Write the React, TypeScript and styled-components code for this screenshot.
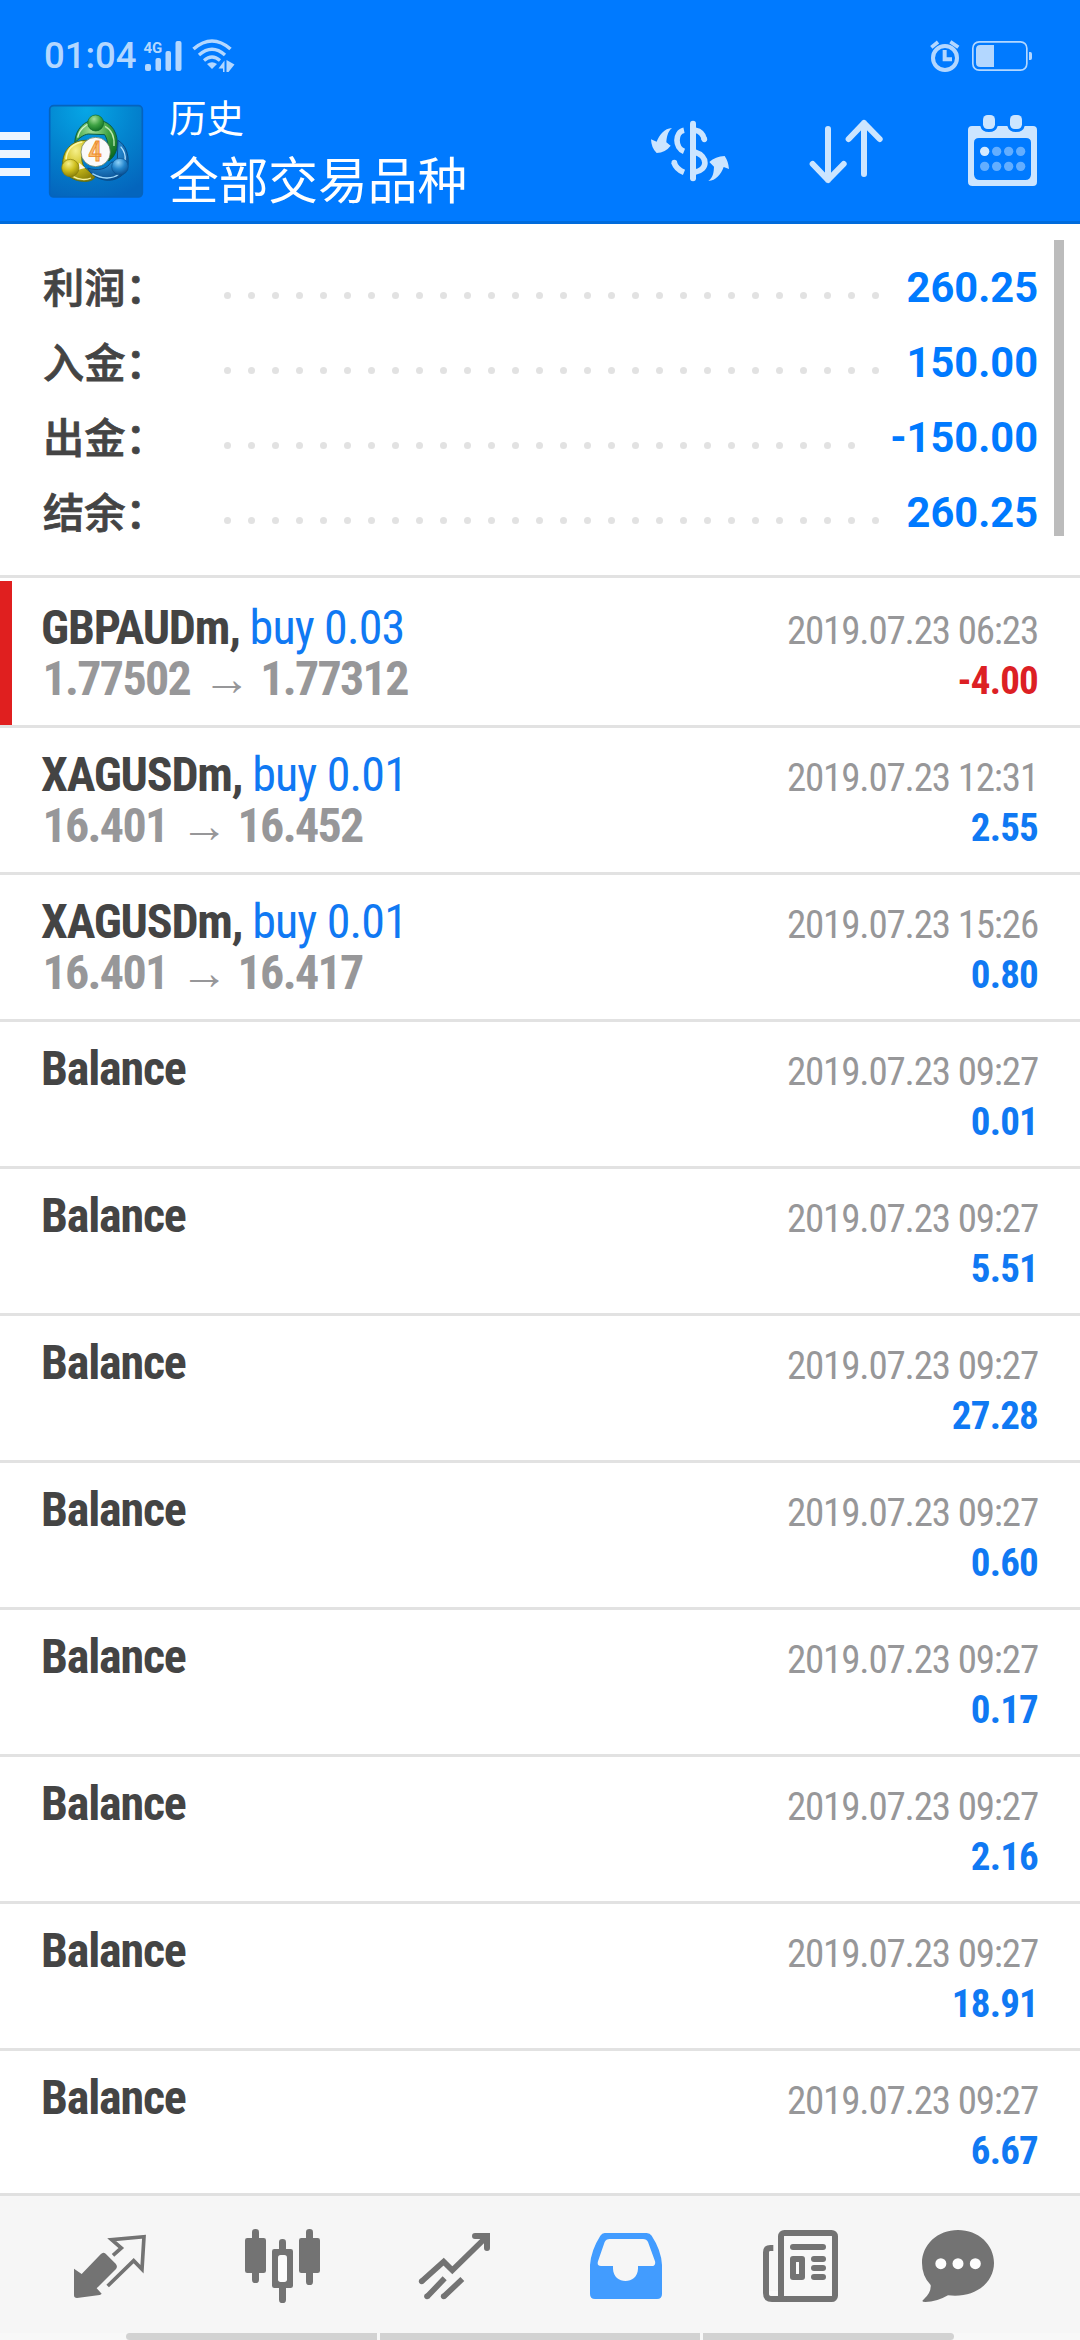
import React from 'react';
import styled, { createGlobalStyle } from 'styled-components';

const blue = '#007aff';
const ink = '#444444';
const muted = '#979799';
const pale = '#cce5ff';
const dim = '#b3d7ff';
const line = '#e2e2e2';
const tabGray = '#737373';

const GlobalStyle = createGlobalStyle`
  *, *::before, *::after { box-sizing: border-box; }
  body {
    margin: 0;
    background: #fff;
    font-family: Roboto, "Noto Sans CJK SC", sans-serif;
  }
`;

const Screen = styled.div`
  display: flex;
  flex-direction: column;
  width: 1080px;
  height: 2340px;
  overflow: hidden;
  background: #fff;
`;

const Header = styled.header`
  flex: none;
  height: 224px;
  background: ${blue};
  border-bottom: 3px solid #006bdc;
`;

const StatusBar = styled.div`
  display: flex;
  align-items: center;
  height: 84px;
  padding: 28px 47px 0 44px;
  color: ${dim};
`;

const Clock = styled.span`
  width: 99px;
  font-size: 36.5px;
  font-weight: 500;
  line-height: 54px;
`;

const StatusIcons = styled.div`
  display: flex;
  align-items: center;
  gap: 9px;
`;

const StatusRight = styled(StatusIcons)`
  margin-left: auto;
  gap: 11px;
`;

const Toolbar = styled.div`
  display: flex;
  align-items: center;
  height: 137px;
  padding: 0 42px 4px 0;
`;

const MenuButton = styled.button`
  display: flex;
  flex-direction: column;
  gap: 10px;
  width: 30px;
  margin: 6px 18px 0 0;
  padding: 0;
  border: 0;
  background: none;
`;

const MenuBar = styled.span`
  height: 8px;
  background: #ecf5ff;
`;

const Titles = styled.div`
  display: flex;
  flex-direction: column;
  margin: 0 0 3px 25px;
  color: #fff;
  font-family: "Noto Sans CJK SC", sans-serif;
`;

const Title = styled.span`
  font-size: 37.5px;
  line-height: 56px;
`;

const Subtitle = styled.span`
  font-size: 49.7px;
  line-height: 66px;
`;

const Actions = styled.div`
  display: flex;
  align-items: center;
  gap: 78px;
  margin-left: auto;

  > :last-child { margin-left: 5px; }
`;

const Summary = styled.section`
  position: relative;
  flex: none;
  height: 354px;
  padding: 26px 42px 0 43px;
  border-bottom: 3px solid ${line};
`;

const SummaryRow = styled.div`
  display: flex;
  align-items: center;
  height: 75px;
`;

const SummaryLabel = styled.span`
  width: 181px;
  padding-bottom: 5px;
  color: ${ink};
  font-family: "Noto Sans CJK SC", sans-serif;
  font-size: 41.2px;
  font-weight: 500;
  -webkit-text-stroke: 0.8px ${ink};
`;

const Leader = styled.div`
  display: flex;
  flex: 1;
  flex-wrap: wrap;
  gap: 17px;
  height: 7px;
  margin: 16px 20px 0 0;
  overflow: hidden;
`;

const Dot = styled.i`
  width: 7px;
  height: 7px;
  border-radius: 50%;
  background: ${line};
`;

const SummaryValue = styled.span`
  color: ${blue};
  font-size: 41.6px;
  font-weight: 700;
`;

const Scrollbar = styled.div`
  position: absolute;
  top: 16px;
  right: 16px;
  width: 10px;
  height: 296px;
  background: #bcbcbc;
`;

const History = styled.main`
  flex: 1;
  min-height: 0;
  padding-top: 3px;
  overflow: hidden;
`;

const Deal = styled.article<{ $loss?: boolean }>`
  display: flex;
  justify-content: space-between;
  height: 147px;
  padding: 21px 42px 0 41px;
  border-bottom: 3px solid ${line};
  background: linear-gradient(${(p) => (p.$loss ? '#e01f1f, #e01f1f' : '#fff, #fff')}) 0 0 / 12px 100% no-repeat;
  font-family: "Roboto Condensed", Roboto, sans-serif;
`;

const DealSide = styled.div<{ $end?: boolean }>`
  display: flex;
  flex-direction: column;
  align-items: ${(p) => (p.$end ? 'flex-end' : 'flex-start')};
  line-height: 51px;
  white-space: pre;
`;

const Instrument = styled.span`
  color: ${ink};
  font-size: 48px;
  font-weight: 700;
  letter-spacing: -1.2px;
`;

const Volume = styled.span`
  color: #1079f3;
  font-weight: 400;
  letter-spacing: -0.85px;
`;

const Prices = styled.span`
  padding-left: 1.5px;
  color: ${muted};
  font-size: 48px;
  font-weight: 700;
  letter-spacing: -1.7px;
`;

const Arrow = styled.span`
  margin-left: 3.3px;
  letter-spacing: 0;
`;

const Time = styled.time`
  margin-top: 5px;
  color: ${muted};
  font-size: 39px;
  letter-spacing: -1.16px;
  line-height: 48px;
`;

const Amount = styled.span<{ $loss?: boolean }>`
  padding-top: 1px;
  color: ${(p) => (p.$loss ? '#dc2024' : '#1079f3')};
  font-size: 39px;
  font-weight: 700;
  letter-spacing: -0.8px;
`;

const TabBar = styled.nav`
  display: grid;
  flex: none;
  grid-template-columns: repeat(4, 172px) 176px 140px;
  height: 140px;
  padding-left: 24px;
  border-top: 3px solid #e0e0e0;
  background: #f6f6f6;
`;

const Tab = styled.button<{ $active?: boolean }>`
  display: flex;
  align-items: center;
  justify-content: center;
  padding: 2px 0 0;
  border: 0;
  background: none;
  color: ${(p) => (p.$active ? '#429cff' : tabGray)};
`;

const GestureBar = styled.div`
  display: grid;
  flex: none;
  grid-template-columns: 251px 320px 251px;
  gap: 3px;
  height: 7px;
  padding-left: 126px;
  background: #f8f8f8;
`;

const Handle = styled.span<{ $radius?: string }>`
  border-radius: ${(p) => p.$radius ?? '0'};
  background: #d2d2d2;
`;

const Signal = () => (
  <svg width="40" height="32" viewBox="0 0 40 32" fill={dim}>
    <text x="0.500" y="12.500" fontFamily="Roboto" fontSize="15" fontWeight="700">4G</text>
    <rect x="2" y="24" width="6" height="7" rx="2" />
    <rect x="12.5" y="18" width="5.5" height="13" rx="2" />
    <rect x="22.5" y="11" width="5.5" height="20" rx="2" />
    <rect x="32.5" y="1" width="6" height="30" rx="2" />
  </svg>
);

const Wifi = () => (
  <svg width="43" height="34" viewBox="0 0 43 34" fill="none" stroke={dim}>
    <path d="M1.5 10Q20 -6 38.5 10" strokeWidth="3.6" />
    <path d="M7 16Q20 4.500 33 16" strokeWidth="3.4" />
    <path d="M12 21.500Q20 14.500 28 21.500" strokeWidth="3.2" />
    <path d="M15 25Q20 21.500 25 25L20 30Z" fill={dim} stroke="none" />
    <path d="M26.500 29.500L32.500 21.500V33H31V29.500ZM34.500 21L42.500 25.500L36.500 33H34.500Z" fill={dim} stroke="none" />
  </svg>
);

const Alarm = () => (
  <svg width="30" height="34" viewBox="870 24 90 102" fill="none" stroke={dim}>
    <circle cx="915" cy="81" r="36" strokeWidth="12" />
    <path d="M914 57V85H936" strokeWidth="12" />
    <path d="M874 49L894 33M931 32L955 49" strokeWidth="11" />
  </svg>
);

const Battery = () => (
  <svg width="62" height="32" viewBox="993 27 186 96">
    <rect x="998.5" y="32.500" width="162" height="85" rx="19" fill="none" stroke={dim} strokeWidth="5" />
    <path d="M1062 42H1021Q1008 42 1008 55V95Q1008 108 1021 108H1062Z" fill={dim} />
    <path d="M1167 63H1171Q1176 63 1176 69V81Q1176 87 1171 87H1167Z" fill={dim} />
  </svg>
);

const Logo = () => (
  <svg width="96" height="94" viewBox="24 30 288 282">
    <defs>
      <radialGradient id="tile" cx="0.4" cy="0.05" r="1">
        <stop offset="0" stopColor="#06a6e6" />
        <stop offset="0.5" stopColor="#0384cf" />
        <stop offset="1" stopColor="#0465bd" />
      </radialGradient>
      <radialGradient id="green" cx="0.4" cy="0.25" r="0.8">
        <stop offset="0" stopColor="#a5e09a" />
        <stop offset="0.5" stopColor="#3fa344" />
        <stop offset="1" stopColor="#0c6a21" />
      </radialGradient>
      <radialGradient id="yellow" cx="0.4" cy="0.25" r="0.8">
        <stop offset="0" stopColor="#f6f08a" />
        <stop offset="0.5" stopColor="#cfbf1d" />
        <stop offset="1" stopColor="#857c08" />
      </radialGradient>
      <radialGradient id="azure" cx="0.4" cy="0.25" r="0.8">
        <stop offset="0" stopColor="#8ed2fa" />
        <stop offset="0.5" stopColor="#2385cc" />
        <stop offset="1" stopColor="#07498c" />
      </radialGradient>
    </defs>
    <rect x="29" y="35" width="278" height="274" rx="12" fill="url(#tile)" stroke="#0563bd" strokeWidth="5" />
    <path d="M104 148C106 102 136 78 167 78C204 78 231 104 232 146C232 172 222 190 206 201C208 168 204 138 194 122L145 120C130 122 114 134 104 148Z" fill="url(#green)" stroke="#0b5c43" strokeWidth="3" />
    <path d="M113 131C117 107 137 91 151 89" fill="none" stroke="#d4f3cb" strokeWidth="4" />
    <path d="M195 97C216 108 224 128 222 156" fill="none" stroke="#b9e8b1" strokeWidth="4" />
    <path d="M144 139C101 137 71 162 68 205C68 242 100 265 142 262C156 260 164 254 166 247L133 220C126 208 124 196 126 184Z" fill="url(#yellow)" stroke="#5d7018" strokeWidth="3" />
    <path d="M127 144C96 149 80 170 78 196" fill="none" stroke="#fbf8a8" strokeWidth="5" />
    <path d="M100 248C116 258 139 259 153 252" fill="none" stroke="#f5f09a" strokeWidth="4" />
    <path d="M118 206L136 222L112 228Z" fill="#fdf7e0" />
    <path d="M234 139C257 153 267 181 264 210C261 244 224 264 194 258C168 253 150 239 143 222C173 232 201 226 213 205L232 203Z" fill="url(#azure)" stroke="#0a4c86" strokeWidth="3" />
    <path d="M242 158C253 171 257 188 255 200" fill="none" stroke="#b6e3ff" strokeWidth="4" />
    <path d="M157 239C184 255 216 257 236 241" fill="none" stroke="#9ed8fb" strokeWidth="4" />
    <circle cx="167" cy="87" r="24" fill="url(#green)" stroke="#0e6a2a" strokeWidth="2" />
    <circle cx="91" cy="222" r="26" fill="url(#yellow)" stroke="#857b0d" strokeWidth="2" />
    <circle cx="240" cy="218" r="25" fill="url(#azure)" stroke="#07508f" strokeWidth="2" />
    <circle cx="167" cy="174" r="44" fill="#fafafa" stroke="#5d7350" strokeWidth="2" />
    <text x="165" y="202" textAnchor="middle" fontFamily="Roboto Condensed" fontSize="82" fontWeight="500" fill="#f9bd70" stroke="#ee8a2e" strokeWidth="2.500">4</text>
  </svg>
);

const CurrencyIcon = () => (
  <svg width="80" height="64" viewBox="30 264 240 192" fill="none" stroke={pale}>
    <path d="M159 278V442" strokeWidth="18" strokeLinecap="round" />
    <path d="M132 298C104 304 104 350 132 361" strokeWidth="17" />
    <path d="M102 394C107 410 117 418 132 424" strokeWidth="17" strokeLinecap="butt" />
    <circle cx="103" cy="395" r="8.500" fill={pale} stroke="none" />
    <path d="M166 298C182 301 190 311 193 325" strokeWidth="17" />
    <circle cx="193" cy="325" r="8.500" fill={pale} stroke="none" />
    <path d="M164 363C206 376 204 417 164 424" strokeWidth="17" />
    <path d="M96 291C82 303 80 320 79 334L92 344Q76 365 50 366Q34 352 33 325L50 332C58 312 73 292 96 291Z" fill={pale} stroke="none" />
    <path d="M205 450C221 438 221 421 222 407L208 393Q226 376 254 375Q265 391 267 414L251 408C243 430 228 449 205 450Z" fill={pale} stroke="none" />
  </svg>
);

const SortIcon = () => (
  <svg width="76" height="66" viewBox="504 264 228 198" fill="none" stroke={pale} strokeWidth="18" strokeLinecap="round" strokeLinejoin="round">
    <path d="M564 297V450M518 402L564 450L611 402" />
    <path d="M672 432V279M626 327L672 279L719 327" />
  </svg>
);

const CalendarIcon = () => (
  <svg width="71" height="73" viewBox="981 252 213 219">
    <path
      fill={pale}
      fillRule="evenodd"
      d="M996 288H1021Q1025 306 1047 306Q1068 306 1073 288H1102Q1107 306 1128 306Q1150 306 1154 288H1179Q1191 288 1191 300V455Q1191 468 1179 468H998Q984 468 984 455V300Q984 288 996 288ZM1017 324Q1002 324 1002 338V434Q1004 450 1020 450H1156Q1171 450 1173 434V338Q1173 324 1158 324Z"
    />
    <rect x="1029" y="255" width="36" height="42" rx="14" fill={pale} />
    <rect x="1110" y="255" width="36" height="42" rx="14" fill={pale} />
    {[364, 409].map((y) =>
      [1034, 1070, 1106, 1142].map((x) => (
        <circle key={`${x}-${y}`} cx={x} cy={y} r="14" fill={x === 1034 && y === 364 ? '#d5eaff' : '#63aeff'} />
      )),
    )}
  </svg>
);

const QuotesIcon = () => (
  <svg width="76" height="66" viewBox="36 129 228 198">
    <path d="M42 236L65 252L122 193Q129 185 137 191L167 221Q174 229 168 237L110 295L125 311Q123 314 119 315L51 324Q42 324 42 316Z" fill="currentColor" />
    <path d="M159 196L184 174L155 149L252 140L246 238L221 212L143 288" fill="none" stroke="currentColor" strokeWidth="11" />
  </svg>
);

const ChartsIcon = () => (
  <svg width="79" height="76" viewBox="546 114 237 228" fill="currentColor">
    <rect x="573" y="117" width="21" height="162" rx="10" />
    <rect x="552" y="144" width="63" height="105" rx="7" />
    <rect x="735" y="117" width="21" height="168" rx="10" />
    <rect x="714" y="144" width="63" height="105" rx="7" />
    <rect x="654" y="147" width="21" height="192" rx="10" />
    <rect x="633" y="177" width="63" height="117" rx="7" />
    <rect x="651" y="195" width="27" height="81" rx="8" fill="#fbfbfb" />
  </svg>
);

const TradeIcon = () => (
  <svg width="75" height="70" viewBox="1068 120 225 210" fill="none" stroke="currentColor" strokeWidth="17">
    <path d="M1082 271L1148 212L1174 238L1276 138" />
    <path d="M1242 135H1278V171" strokeWidth="18" strokeLinecap="round" />
    <path d="M1151 262L1098 317M1204 264L1148 317" />
    <g fill="currentColor" stroke="none">
      <circle cx="1082" cy="271" r="8.500" />
      <circle cx="1098" cy="316" r="8.500" />
      <circle cx="1148" cy="316" r="8.500" />
    </g>
  </svg>
);

const HistoryIcon = () => (
  <svg width="76" height="70" viewBox="27 120 228 210">
    <path
      fill="currentColor"
      fillRule="evenodd"
      d="M77 126H203Q213 126 218 134Q247 178 249 222V309Q249 324 234 324H48Q33 324 33 309V222Q36 178 64 134Q69 126 77 126ZM92 144Q81 144 77 153L57 211Q53 225 66 225H102V233C103 282 176 282 177 233V225H218Q231 225 228 211L207 153Q203 144 192 144Z"
    />
  </svg>
);

const NewsIcon = () => (
  <svg width="79" height="74" viewBox="543 114 237 222">
    <rect x="603" y="126" width="162" height="198" rx="10" fill="#f8f8f8" stroke="currentColor" strokeWidth="18" />
    <path d="M580 171H571Q558 171 558 184V306Q558 324 576 324H620" fill="none" stroke="currentColor" strokeWidth="18" />
    <path d="M567 300V308Q567 315 574 315H588Q594 315 594 308V300Z" fill="#fafafa" />
    <g fill="currentColor">
      <rect x="630" y="159" width="108" height="18" rx="9" />
      <rect x="630" y="195" width="45" height="72" rx="9" />
      <rect x="693" y="195" width="45" height="18" rx="9" />
      <rect x="693" y="222" width="45" height="18" rx="9" />
      <rect x="693" y="249" width="45" height="18" rx="9" />
    </g>
    <rect x="648" y="213" width="9" height="36" rx="1" fill="#fafafa" />
  </svg>
);

const ChatIcon = () => (
  <svg width="76" height="76" viewBox="1020 111 228 228">
    <path d="M1134 117C1195 117 1242 161 1242 216C1242 277 1182 323 1104 313Q1070 333 1036 333Q1022 333 1030 326Q1054 305 1052 282Q1026 256 1026 216C1026 161 1073 117 1134 117Z" fill="currentColor" />
    <g fill="#fdfdfd">
      <circle cx="1082.500" cy="218" r="16.500" />
      <circle cx="1134" cy="218" r="16.500" />
      <circle cx="1186" cy="218" r="16.500" />
    </g>
  </svg>
);

const summary = [
  ['利润：', '260.25'],
  ['入金：', '150.00'],
  ['出金：', '-150.00'],
  ['结余：', '260.25'],
];

type DealData = { symbol?: string; volume?: string; open?: string; close?: string; time: string; amount: string };

const balance = (amount: string): DealData => ({ time: '2019.07.23 09:27', amount });

const deals: DealData[] = [
  { symbol: 'GBPAUDm', volume: 'buy 0.03', open: '1.77502', close: '1.77312', time: '2019.07.23 06:23', amount: '-4.00' },
  { symbol: 'XAGUSDm', volume: 'buy 0.01', open: '16.401', close: '16.452', time: '2019.07.23 12:31', amount: '2.55' },
  { symbol: 'XAGUSDm', volume: 'buy 0.01', open: '16.401', close: '16.417', time: '2019.07.23 15:26', amount: '0.80' },
  ...['0.01', '5.51', '27.28', '0.60', '0.17', '2.16', '18.91', '6.67'].map(balance),
];

// More dots than fit: the surplus wraps to a second line that the leader clips.
const dots = Array.from({ length: 40 }, (_, i) => <Dot key={i} />);

export default function App() {
  return (
    <>
      <GlobalStyle />
      <Screen>
        <Header>
          <StatusBar>
            <Clock>01:04</Clock>
            <StatusIcons>
              <Signal />
              <Wifi />
            </StatusIcons>
            <StatusRight>
              <Alarm />
              <Battery />
            </StatusRight>
          </StatusBar>
          <Toolbar>
            <MenuButton>
              <MenuBar />
              <MenuBar />
              <MenuBar />
            </MenuButton>
            <Logo />
            <Titles>
              <Title>历史</Title>
              <Subtitle>全部交易品种</Subtitle>
            </Titles>
            <Actions>
              <CurrencyIcon />
              <SortIcon />
              <CalendarIcon />
            </Actions>
          </Toolbar>
        </Header>
        <Summary>
          {summary.map(([label, value]) => (
            <SummaryRow key={label}>
              <SummaryLabel>{label}</SummaryLabel>
              <Leader>{dots}</Leader>
              <SummaryValue>{value}</SummaryValue>
            </SummaryRow>
          ))}
          <Scrollbar />
        </Summary>
        <History>
          {deals.map((deal, i) => {
            const loss = deal.amount.startsWith('-');
            return (
              <Deal key={i} $loss={loss}>
                <DealSide>
                  <Instrument>
                    {deal.symbol ? `${deal.symbol}, ` : 'Balance'}
                    {deal.volume && <Volume>{deal.volume}</Volume>}
                  </Instrument>
                  {deal.open && (
                    <Prices>
                      {`${deal.open} `}
                      <Arrow>→</Arrow>
                      {` ${deal.close}`}
                    </Prices>
                  )}
                </DealSide>
                <DealSide $end>
                  <Time>{deal.time}</Time>
                  <Amount $loss={loss}>{deal.amount}</Amount>
                </DealSide>
              </Deal>
            );
          })}
        </History>
        <TabBar>
          <Tab><QuotesIcon /></Tab>
          <Tab><ChartsIcon /></Tab>
          <Tab><TradeIcon /></Tab>
          <Tab $active><HistoryIcon /></Tab>
          <Tab><NewsIcon /></Tab>
          <Tab><ChatIcon /></Tab>
        </TabBar>
        <GestureBar>
          <Handle $radius="4px 0 0 4px" />
          <Handle />
          <Handle $radius="0 4px 4px 0" />
        </GestureBar>
      </Screen>
    </>
  );
}
